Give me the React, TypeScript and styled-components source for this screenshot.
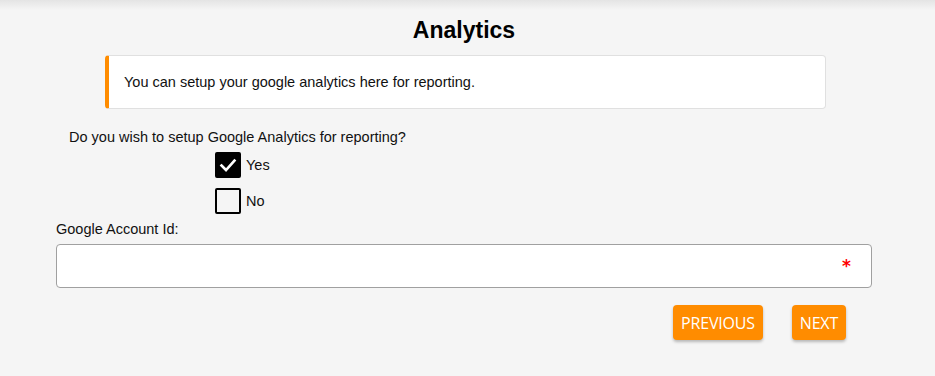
import React, { useState } from 'react'
import styled, { createGlobalStyle } from 'styled-components';

const GlobalStyle = createGlobalStyle`
  html, body {
    margin: 0;
    padding: 0;
    background: #f5f5f5;
  }
  body {
    font-family: "Liberation Sans", Arial, sans-serif;
    color: #111;
  }
`;

const CheckIcon = () => (
  <svg width="18" height="18" viewBox="0 0 18 18">
    <path d="M2.5 9.5 L7 14 L15.5 4.5" fill="none" stroke="#fff" strokeWidth="2.6" strokeLinecap="square" />
  </svg>
)

const App = () => {
  const [enabled, setEnabled] = useState(true);
  const [accountId, setAccountId] = useState('');

  return (
    <S.Page>
      <GlobalStyle />
      <S.TopShadow />
      <S.Title>Analytics</S.Title>
      <S.InfoBox>You can setup your google analytics here for reporting.</S.InfoBox>
      <S.Question>Do you wish to setup Google Analytics for reporting?</S.Question>
      <S.Options>
        <S.Option onClick={() => setEnabled(true)}>
          <S.Box $checked={enabled}>{enabled && <CheckIcon />}</S.Box>
          Yes
        </S.Option>
        <S.Option onClick={() => setEnabled(false)}>
          <S.Box $checked={!enabled}>{!enabled && <CheckIcon />}</S.Box>
          No
        </S.Option>
      </S.Options>
      <S.FieldLabel>Google Account Id:</S.FieldLabel>
      <S.InputWrap>
        <S.Input value={accountId} onChange={e => setAccountId(e.target.value)} />
        <S.Required>*</S.Required>
      </S.InputWrap>
      <S.Actions>
        <S.Button>PREVIOUS</S.Button>
        <S.Button>NEXT</S.Button>
      </S.Actions>
    </S.Page>
  )
}

const S = {
  Page: styled.div`
    width: 935px;
    height: 376px;
    box-sizing: border-box;
    display: flex;
    flex-direction: column;
    padding: 0 63px 0 56px;
    background: #f5f5f5;
    overflow: hidden;
  `,
  TopShadow: styled.div`
    height: 10px;
    margin: 0 -63px 0 -56px;
    background: linear-gradient(#e4e4e4, #f5f5f5);
  `,
  Title: styled.h1`
    margin: 6px 0 0;
    text-align: center;
    font-size: 23px;
    font-weight: bold;
    line-height: 28px;
    color: #000;
  `,
  InfoBox: styled.div`
    margin: 11px 46px 0 49px;
    height: 54px;
    box-sizing: border-box;
    display: flex;
    align-items: center;
    padding-left: 15px;
    background: #fff;
    border: 1px solid #e0e0e0;
    border-left: 4px solid #ff8c00;
    border-radius: 4px;
    font-size: 14.5px;
  `,
  Question: styled.div`
    margin: 19px 0 0 13px;
    font-size: 14.5px;
    line-height: 18px;
  `,
  Options: styled.div`
    display: flex;
    flex-direction: column;
    gap: 10px;
    margin: 6px 0 0 159px;
  `,
  Option: styled.label`
    display: flex;
    align-items: center;
    gap: 5px;
    font-size: 14.5px;
    cursor: pointer;
  `,
  Box: styled.span<{ $checked: boolean }>`
    width: 26px;
    height: 26px;
    box-sizing: border-box;
    display: flex;
    align-items: center;
    justify-content: center;
    border: 2px solid #000;
    border-radius: 2px;
    background: ${p => (p.$checked ? '#000' : 'transparent')};
  `,
  FieldLabel: styled.div`
    margin-top: 6px;
    font-size: 14.5px;
    line-height: 18px;
  `,
  InputWrap: styled.div`
    position: relative;
    margin-top: 6px;
  `,
  Input: styled.input`
    width: 100%;
    height: 44px;
    box-sizing: border-box;
    border: 1px solid #a0a0a0;
    border-radius: 4px;
    background: #fff;
    padding: 0 36px 0 10px;
    font-size: 14px;
    font-family: inherit;
    outline: none;
  `,
  Required: styled.span`
    position: absolute;
    right: 21px;
    top: 12px;
    color: #f00;
    font-family: "DejaVu Sans", sans-serif;
    font-size: 17px;
    font-weight: bold;
    line-height: 20px;
  `,
  Actions: styled.div`
    display: flex;
    justify-content: flex-end;
    gap: 29px;
    margin: 17px 26px 0 0;
  `,
  Button: styled.button`
    height: 35px;
    padding: 0 8px;
    border: none;
    border-radius: 4px;
    background: #ff8c00;
    color: #fff;
    font-family: "Open Sans", Tahoma, sans-serif;
    font-size: 16px;
    letter-spacing: -0.2px;
    box-shadow: 0 2px 3px rgba(0, 0, 0, 0.25);
    cursor: pointer;
  `,
}

export default App
